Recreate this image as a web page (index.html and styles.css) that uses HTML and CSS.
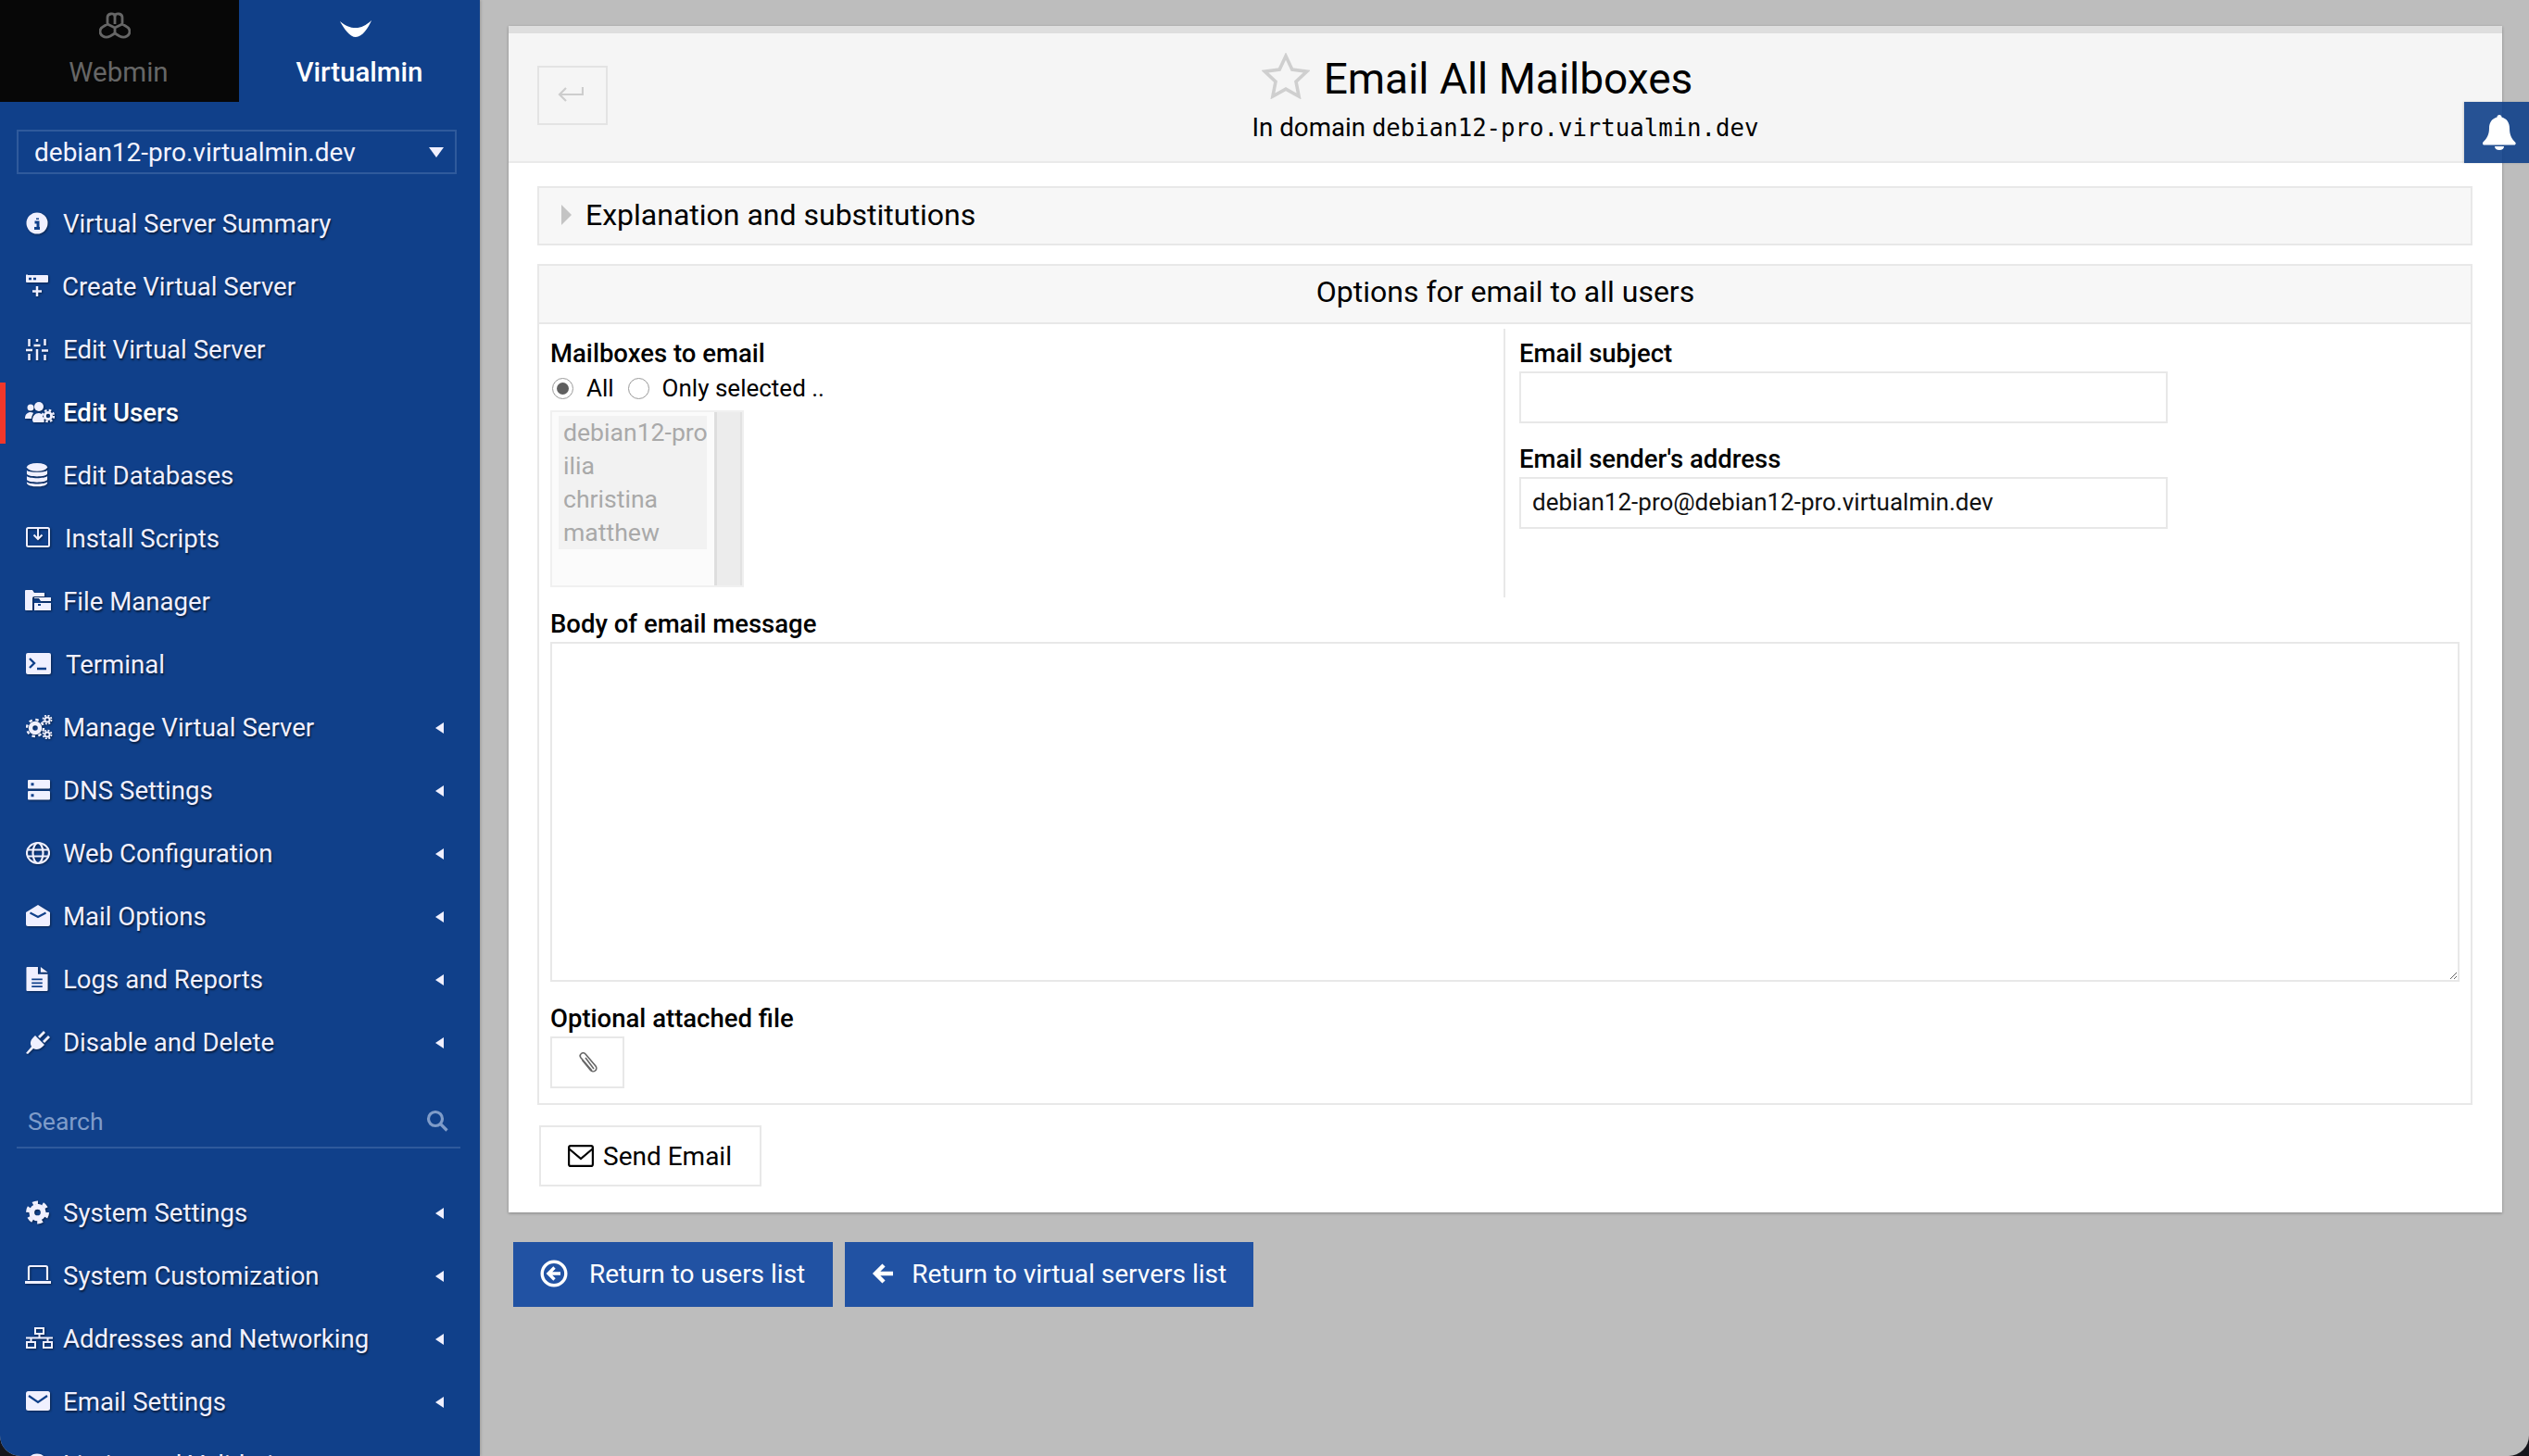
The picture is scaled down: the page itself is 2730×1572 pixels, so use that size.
FILE: index.html
```html
<!DOCTYPE html>
<html lang="en">
<head>
<meta charset="utf-8">
<title>Email All Mailboxes</title>
<link rel="stylesheet" href="styles.css">
</head>
<body>
<div class="window">
  <aside class="sidebar">
    <div class="tabs">
      <div class="tab tab-off">
        <svg class="tab-ico" width="34" height="32" viewBox="0 0 34 32" fill="none" stroke="currentColor" stroke-width="2.800"><path d="M17 4c-1-3-8-3-8 2v7l-5 3c-4 2-4 8 0 10 3 2 6 1 8 0l5-3 5 3c2 1 5 2 8 0 4-2 4-8 0-10l-5-3V6c0-5-7-5-8-2z"/><path d="M17 4v9M9 13l8 4 8-4M17 17v6"/></svg>
        <span>Webmin</span>
      </div>
      <div class="tab tab-on">
        <svg class="tab-ico" width="38" height="18" viewBox="0 0 38 20" fill="currentColor"><path d="M0 1c6 5 12 8 19 8S31 6 38 0c-4 9-11 20-19 20C12 20 5 10 0 1z"/></svg>
        <span>Virtualmin</span>
      </div>
    </div>
    <div class="domain"><span>debian12-pro.virtualmin.dev</span><i class="caret-down"></i></div>
    <nav class="menu">
      <a class="item"><svg class="ico" viewBox="0 0 24 24"><circle cx="12" cy="12" r="11.500" fill="currentColor"/><path class="cut" d="M9.500 11h3.500v6M9 17.500h6M12.500 6.500v1.500" stroke-width="3"/></svg><span>Virtual Server Summary</span></a>
      <a class="item"><svg class="ico" viewBox="0 0 24 24"><path fill="currentColor" d="M2 0h21a1 1 0 0 1 1 1v6a1 1 0 0 1-1 1H1a1 1 0 0 1-1-1V1a1 1 0 0 1 2-1z"/><path class="cut" d="M3 4h3M8 4h3" stroke-width="2.500"/><path d="M12 12v11M7 17.500h10" stroke="currentColor" stroke-width="2.500" fill="none"/></svg><span class="t-l2">Create Virtual Server</span></a>
      <a class="item"><svg class="ico" viewBox="0 0 24 24" fill="none" stroke="currentColor" stroke-width="2.500"><path d="M3.500 1v8M3.500 17v7M12 1v3M12 12v12M20.500 1v7M20.500 18v6M0 13h7M8.500 8h7M17 13.500h7"/></svg><span>Edit Virtual Server</span></a>
      <a class="item active"><svg class="ico ico-wide" viewBox="0 0 32 24" fill="currentColor"><circle cx="6" cy="7" r="3.500"/><circle cx="15" cy="6" r="5"/><path d="M0 19c0-5 3-7 6-7 2 0 3 1 3 1-1 2-2 4-2 6zM8 21c0-5 3-8 7-8 2 0 3 1 4 2 0 2 1 5 2 7l-1 1H9z"/><circle cx="25" cy="16" r="3.600" fill="none" stroke="currentColor" stroke-width="2.800"/><circle cx="25" cy="16" r="6" fill="none" stroke="currentColor" stroke-width="2.400" stroke-dasharray="2.500 2.210"/></svg><span>Edit Users</span></a>
      <a class="item"><svg class="ico" viewBox="0 0 24 27" fill="currentColor"><ellipse cx="12" cy="4.500" rx="11.500" ry="4.500"/><path d="M.500 8c2 3 21 3 23 0v4c-1 4-22 4-23 0zM.500 14.500c2 3 21 3 23 0v4c-1 4-22 4-23 0zM.500 21c2 3 21 3 23 0v1.500c-1 5-22 5-23 0z"/></svg><span>Edit Databases</span></a>
      <a class="item"><svg class="ico ico-26" viewBox="0 0 26 24" fill="none" stroke="currentColor" stroke-width="2"><rect x="1" y="1" width="24" height="20" rx="1.500"/><path d="M13 1v11M8.500 8.500l4.500 4.500 4.500-4.500"/></svg><span class="t-r1">Install Scripts</span></a>
      <a class="item"><svg class="ico ico-28" viewBox="0 0 28 24" fill="currentColor"><path d="M0 1a1 1 0 0 1 1-1h7l2 3h11v4H10a2 2 0 0 0-2 2v13H1a1 1 0 0 1-1-1z"/><path d="M10 9h5l2 3h11v-4H10zM10 14h18v8H10z"/><path class="cut" d="M14 16h3" stroke-width="2"/></svg><span>File Manager</span></a>
      <a class="item"><svg class="ico ico-27" viewBox="0 0 27 24" fill="currentColor"><rect width="27" height="23" rx="2"/><path class="cut" d="M4 6l5 5-5 5M12 17h10" stroke-width="2.400"/></svg><span class="t-r2">Terminal</span></a>
      <a class="item more"><svg class="ico ico-29" viewBox="0 0 29 26"><circle cx="10" cy="14" r="5" fill="none" stroke="currentColor" stroke-width="4.500"/><circle cx="10" cy="14" r="9" fill="none" stroke="currentColor" stroke-width="2.400" stroke-dasharray="3.500 3.570"/><circle cx="23" cy="5" r="2.600" fill="none" stroke="currentColor" stroke-width="2"/><circle cx="23" cy="5" r="4.500" fill="none" stroke="currentColor" stroke-width="1.800" stroke-dasharray="2 1.530"/><circle cx="23" cy="21" r="2.600" fill="none" stroke="currentColor" stroke-width="2"/><circle cx="23" cy="21" r="4.500" fill="none" stroke="currentColor" stroke-width="1.800" stroke-dasharray="2 1.530"/></svg><span>Manage Virtual Server</span><i class="caret-left"></i></a>
      <a class="item more"><svg class="ico ico-dns" viewBox="0 0 24 24" fill="currentColor"><rect y="1" width="24" height="9.500" rx="1"/><rect y="13" width="24" height="9.500" rx="1"/><path class="cut" d="M3.500 5.700h3M3.500 17.700h3" stroke-width="3"/></svg><span class="t-l1">DNS Settings</span><i class="caret-left"></i></a>
      <a class="item more"><svg class="ico ico-26" viewBox="0 0 26 24" fill="none" stroke="currentColor" stroke-width="2.200"><ellipse cx="13" cy="12" rx="12" ry="11"/><ellipse cx="13" cy="12" rx="5.500" ry="11"/><path d="M1.500 8.500h23M1.500 15.500h23"/></svg><span class="t-l1">Web Configuration</span><i class="caret-left"></i></a>
      <a class="item more"><svg class="ico ico-26" viewBox="0 0 26 24" fill="currentColor"><path d="M13 0l13 8v13a2 2 0 0 1-2 2H2a2 2 0 0 1-2-2V8z"/><path class="cut" d="M4.500 8.500L13 13l8.500-4.500" stroke-width="2" /></svg><span class="t-l1">Mail Options</span><i class="caret-left"></i></a>
      <a class="item more"><svg class="ico" viewBox="0 0 24 27" fill="currentColor"><path d="M0 1a1 1 0 0 1 1-1h12v8h11v18a1 1 0 0 1-1 1H1a1 1 0 0 1-1-1z"/><path d="M16 0l8 6h-8z"/><path class="cut" d="M6 14h12M6 18h12M6 22h12" stroke-width="1.800"/></svg><span>Logs and Reports</span><i class="caret-left"></i></a>
      <a class="item more"><svg class="ico ico-26" viewBox="0 0 26 26" fill="currentColor"><path d="M0 25l6-7c-2-4-1-7 2-10l2-2 10 10-2 2c-3 3-7 4-10 2l-6 6z"/><path d="M13 7l6-6 2 2-6 6zM18 12l6-6 2 2-6 6z"/></svg><span>Disable and Delete</span><i class="caret-left"></i></a>
    </nav>
    <div class="search"><span>Search</span><svg width="24" height="24" viewBox="0 0 24 24" fill="none" stroke="currentColor" stroke-width="3.200"><circle cx="10" cy="10" r="7.500"/><path d="M15.500 15.500l7 7"/></svg></div>
    <nav class="menu menu-sys">
      <a class="item more"><svg class="ico ico-25" viewBox="0 0 26 26"><circle cx="13" cy="13" r="6.500" fill="none" stroke="currentColor" stroke-width="6"/><circle cx="13" cy="13" r="11" fill="none" stroke="currentColor" stroke-width="4" stroke-dasharray="6 5.500"/></svg><span>System Settings</span><i class="caret-left"></i></a>
      <a class="item more"><svg class="ico ico-28" viewBox="0 0 28 22" fill="none" stroke="currentColor" stroke-width="2.200"><path d="M4 16V2.500A1.500 1.500 0 0 1 5.500 1h17A1.500 1.500 0 0 1 24 2.500V16"/><path d="M0 18.500h28" stroke-width="3"/></svg><span>System Customization</span><i class="caret-left"></i></a>
      <a class="item more"><svg class="ico ico-29" viewBox="0 0 29 24" fill="none" stroke="currentColor" stroke-width="2"><rect x="10" y="1" width="9" height="6"/><rect x="1" y="16" width="9" height="6"/><rect x="19" y="16" width="9" height="6"/><path d="M0 11.500h29M14.500 7v4.500M5.500 11.500V16M23.500 11.500V16"/></svg><span>Addresses and Networking</span><i class="caret-left"></i></a>
      <a class="item more"><svg class="ico ico-26" viewBox="0 0 26 22" fill="currentColor"><rect width="26" height="21" rx="2.500"/><path class="cut" d="M3 5l10 7 10-7" stroke-width="2.200"/></svg><span class="t-l1">Email Settings</span><i class="caret-left"></i></a>
      <a class="item more"><svg class="ico" viewBox="0 0 24 24" fill="currentColor"><circle cx="12" cy="12" r="11.500"/></svg><span>Limits and Validation</span><i class="caret-left"></i></a>
    </nav>
  </aside>

  <main class="content">
    <section class="panel">
      <header class="panel-head">
        <div class="head-left">
          <button class="back" type="button"><svg width="28" height="20" viewBox="0 0 28 20" fill="none" stroke="#cdcdcd" stroke-width="2.200"><path d="M27 1v8H2M9 2L2 9l7 7"/></svg></button>
        </div>
        <div class="head-title">
          <h1><svg class="star" width="52" height="50" viewBox="0 0 52 50" fill="none" stroke="#cfcfcf" stroke-width="3.600"><path d="M26 3.500l6.800 14.600 16 2-11.800 11 3.100 15.900L26 39.100 11.900 47l3.100-15.900-11.800-11 16-2z"/></svg>Email All Mailboxes</h1>
          <p>In domain <code>debian12-pro.virtualmin.dev</code></p>
        </div>
        <div class="head-right"></div>
      </header>
      <div class="panel-body">
        <div class="explain"><i class="caret-right"></i>Explanation and substitutions</div>
        <div class="options">
          <div class="options-head">Options for email to all users</div>
          <div class="cols">
            <div class="col col-left">
              <label class="lbl">Mailboxes to email</label>
              <div class="radios">
                <span class="radio radio-on"></span><span class="radio-text">All</span>
                <span class="radio"></span><span class="radio-text">Only selected ..</span>
              </div>
              <div class="listbox">
                <div class="list-items">
                  <div class="opts"><div>debian12-pro</div><div>ilia</div><div>christina</div><div>matthew</div></div>
                </div>
                <div class="scroll"></div>
              </div>
            </div>
            <div class="col col-right">
              <label class="lbl">Email subject</label>
              <input class="field" type="text">
              <label class="lbl lbl-second">Email sender's address</label>
              <input class="field" type="text" value="debian12-pro@debian12-pro.virtualmin.dev">
            </div>
          </div>
          <div class="wide">
            <label class="lbl">Body of email message</label>
            <textarea class="body-text"></textarea>
            <label class="lbl lbl-attach">Optional attached file</label>
            <button class="attach" type="button"><svg width="24" height="24" viewBox="0 0 24 24" fill="none" stroke="#666" stroke-width="1.600"><path d="M17 20L5 6a3 3 0 0 1 5-4l11 13a3.500 3.500 0 0 1-5.500 4.500L6.500 8.500"/><path d="M10 6l9 12"/></svg></button>
          </div>
        </div>
        <button class="send" type="button"><svg width="28" height="24" viewBox="0 0 28 24" fill="none" stroke="#000" stroke-width="2.200"><rect x="1.100" y="1.100" width="25.800" height="21.800" rx="2"/><path d="M1.500 4.500L14 15 26.500 4.500"/></svg>Send Email</button>
      </div>
    </section>
    <div class="returns">
      <a class="ret ret-users"><svg width="30" height="30" viewBox="0 0 30 30" fill="none" stroke="#fff" stroke-width="3.400"><circle cx="15" cy="15" r="12.800"/><path d="M22 15H10M15.500 8.500L9 15l6.500 6.500"/></svg>Return to users list</a>
      <a class="ret ret-servers"><svg width="24" height="24" viewBox="0 0 24 24" fill="none" stroke="#fff" stroke-width="4.400"><path d="M23 12H5M13 3l-9 9 9 9"/></svg>Return to virtual servers list</a>
    </div>
    <div class="bell"><svg width="36" height="38" viewBox="0 0 36 38" fill="#fff"><path d="M18 0c1.500 0 2.500 1 2.500 2.500 5.500 1.500 8.500 6 8.500 12 0 7 2 11 6.500 15.500.5 1 0 2-1 2.500H1c-1-.5-1.500-1.500-1-2.500C4.500 25.500 7 21.500 7 14.500c0-6 3-10.500 8.500-12C15.500 1 16.500 0 18 0z"/><path d="M13 34h10c0 2.500-2 4-5 4s-5-1.500-5-4z"/></svg></div>
  </main>
</div>
</body>
</html>
```
FILE: styles.css
```css
* { box-sizing: border-box; }
html, body { margin: 0; height: 100%; background: #15151b; }
body { font-family: Roboto, "Liberation Sans", sans-serif; font-size: 26.6px; color: #000; overflow: hidden; }
.window { display: flex; height: 1572px; overflow: hidden; border-radius: 0 0 22px 22px; background: #bdbdbd; }

/* sidebar */
.sidebar { width: 518px; flex: none; background: #10408a; color: #f0f0ff; overflow: hidden; box-shadow: 1px 0 3px rgba(0,0,0,.2); }
.tabs { display: flex; height: 110px; }
.tab { display: flex; flex-direction: column; align-items: center; font-size: 29.5px; line-height: 32px; }
.tab-off { width: 258px; background: #070707; color: #666; padding-top: 13px; }
.tab-off .tab-ico { margin: 0 0 17px -10px; }
.tab-off span { margin-left: -2px; }
.tab-on { flex: 1; color: #fff; font-weight: 500; padding-top: 22px; }
.tab-on .tab-ico { margin: 0 0 22px -8px; }
.domain { display: flex; align-items: center; justify-content: space-between; margin: 30px 25px 0 18px; height: 48px; padding: 0 12px 0 17px; border: 2px solid #2f5a9c; font-size: 28px; color: #f4f4ff; }
.caret-down { width: 0; height: 0; border: 8.500px solid transparent; border-top: 11px solid #f0f0ff; border-bottom: 0; }
.menu { margin-top: 19px; }
.menu-sys { margin-top: 35px; }
.item { display: flex; align-items: center; height: 68px; padding-left: 28px; font-size: 27.6px; text-shadow: 1px 2px 2px rgba(0,0,0,.55); position: relative; }
.item span { position: absolute; left: 68px; white-space: nowrap; }
.item .t-l2 { left: 67px; }
.item .t-l1 { left: 68px; }
.item .t-r1 { left: 70px; }
.item .t-r2 { left: 71px; }
.ico { width: 24px; height: 26px; color: #f0f0ff; filter: drop-shadow(1px 1px 1px rgba(0,0,0,.45)); }
.ico .cut { fill: none; stroke: #10408a; }
.ico-wide { width: 32px; margin-left: -1px; }
.ico-26 { width: 26px; }
.ico-25 { width: 25px; }
.ico-27 { width: 27px; }
.ico-28 { width: 28px; margin-left: -1px; }
.ico-29 { width: 29px; }
.ico-dns { margin-left: 2px; }
.active { color: #fff; font-weight: 500; }
.active::before { content: ""; position: absolute; left: 0; top: 2px; bottom: 0; width: 6px; background: #f0372a; }
.more .caret-left { position: absolute; left: 470px; top: 29px; width: 0; height: 0; border: 6.500px solid transparent; border-right: 9px solid #f0f0ff; border-left: 0; }
.search { display: flex; align-items: center; justify-content: space-between; margin: 0 21px 0 18px; height: 81px; padding: 23px 13px 0 12px; border-bottom: 2px solid #2f5a9c; color: #7f9cc9; font-size: 26.6px; }

/* main */
.content { flex: 1; padding: 28px 29px 0 31px; position: relative; min-width: 0; }
.panel { background: #fff; border-top: 8px solid #dedede; box-shadow: 0 1px 3px rgba(0,0,0,.3); height: 1281px; }
.panel-head { display: grid; grid-template-columns: 1fr auto 1fr; height: 140px; background: #f5f5f5; border-bottom: 2px solid #eaeaea; padding: 35px 31px 0; }
.back { width: 76px; height: 64px; background: transparent; border: 2px solid #e3e3e3; padding: 3px 4px 0 0; }
.head-title { text-align: center; }
h1 { margin: -19px 0 0; padding-left: 6px; font-size: 46px; font-weight: 400; line-height: 70px; height: 66px; display: flex; justify-content: center; align-items: center; }
.star { margin: -6px 15px 0 -67px; }
.head-title p { margin: 0; font-size: 27.7px; line-height: 40px; }
code { font-family: "DejaVu Sans Mono", monospace; font-size: 25.7px; }
.panel-body { padding: 25px 32px 0 31px; }
.explain { height: 64px; display: flex; align-items: center; background: #f7f7f7; border: 2px solid #e8e8e8; font-size: 32px; padding: 0 0 2px 24px; }
.caret-right { width: 0; height: 0; border: 11px solid transparent; border-left: 11px solid #c4c4c4; border-right: 0; margin-right: 15px; }
.options { margin-top: 20px; border: 2px solid #e8e8e8; height: 908px; }
.options-head { height: 63px; background: #f7f7f7; border-bottom: 2px solid #e8e8e8; display: flex; align-items: center; justify-content: center; font-size: 32px; padding: 0 0 5px 1px; }
.cols { display: flex; height: 293px; }
.col { padding: 15px 12px 0 12px; }
.col-left { width: 1043px; border-right: 2px solid #e8e8e8; height: 290px; margin-top: 5px; padding-top: 10px; }
.col-right { padding-left: 15px; }
.lbl { display: block; font-weight: 500; font-size: 27.5px; line-height: 34px; }
.lbl-second { margin-top: 22px; }
.radios { display: flex; align-items: center; height: 38px; margin: 1px 0 0 2px; font-size: 26px; }
.radio { width: 23px; height: 23px; border: 1.500px solid #9a9a9a; border-radius: 50%; background: #fff; flex: none; display: flex; align-items: center; justify-content: center; }
.radio-on::after { content: ""; width: 13px; height: 13px; border-radius: 50%; background: #5f5f5f; }
.radio-text { margin: 0 15px 0 14px; }
.listbox { display: flex; width: 209px; height: 191px; margin-top: 5px; border: 2px solid #f0f0f0; background: #fbfbfb; }
.list-items { flex: 1; padding: 4px 8px 0 7px; min-width: 0; }
.opts { background: #f2f2f2; color: #a9a9a9; padding-left: 5px; line-height: 36px; white-space: nowrap; }
.scroll { width: 30px; background: #ececec; border-left: 3px solid #dedede; border-right: 2px solid #e2e2e2; }
.field { display: block; width: 700px; height: 56px; margin-top: 2px; border: 2px solid #e8e8e8; padding: 0 12px 2px; font: 400 26px Roboto, sans-serif; color: #111; background: #fff; outline: none; }
.wide { padding: 14px 12px 0; }
.body-text { display: block; width: 100%; height: 367px; margin-top: 2px; border: 2px solid #e8e8e8; background: #fff; outline: none; }
.lbl-attach { margin-top: 23px; }
.attach { display: block; width: 80px; height: 56px; margin-top: 2px; background: #fff; border: 2px solid #e8e8e8; padding: 4px 0 0; }
.send { display: flex; align-items: center; gap: 10px; margin: 22px 0 0 2px; width: 240px; height: 66px; padding: 0 0 0 29px; background: #fff; border: 2px solid #e8e8e8; font: 400 28px Roboto, sans-serif; color: #000; }
.returns { display: flex; gap: 13px; margin: 32px 0 0 5px; }
.ret { display: flex; align-items: center; height: 70px; padding: 0 29px 2px; background: #2152a3; color: #fff; font-size: 28px; }
.ret-users { padding-right: 30px; }
.ret-users svg { margin-right: 23px; }
.ret-servers svg { margin-right: 19px; }
.bell { position: absolute; right: 0; top: 110px; width: 70px; height: 66px; padding-left: 6px; display: flex; align-items: center; justify-content: center; background: rgba(16,64,138,.9); box-shadow: -1px 0 2px rgba(0,0,0,.15); }
```
